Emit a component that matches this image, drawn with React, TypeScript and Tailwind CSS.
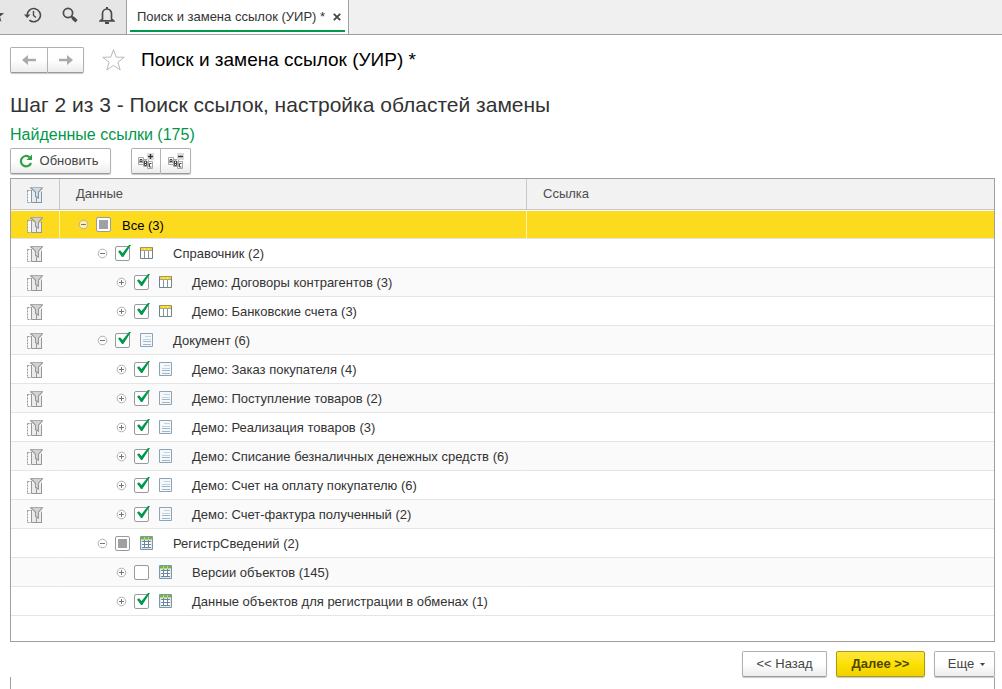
import { ReactNode, useState } from "react"
import clsx from "clsx"

type Kind = "catalog" | "document" | "register"
type State = "on" | "off" | "mixed"

type Row = {
  title: string
  level: 0 | 1 | 2
  state: State
  kind?: Kind
  filter?: boolean
}

const rows: Row[] = [
  { title: "Все (3)", level: 0, state: "mixed", filter: true },
  { title: "Справочник (2)", level: 1, state: "on", kind: "catalog", filter: true },
  { title: "Демо: Договоры контрагентов (3)", level: 2, state: "on", kind: "catalog", filter: true },
  { title: "Демо: Банковские счета (3)", level: 2, state: "on", kind: "catalog", filter: true },
  { title: "Документ (6)", level: 1, state: "on", kind: "document", filter: true },
  { title: "Демо: Заказ покупателя (4)", level: 2, state: "on", kind: "document", filter: true },
  { title: "Демо: Поступление товаров (2)", level: 2, state: "on", kind: "document", filter: true },
  { title: "Демо: Реализация товаров (3)", level: 2, state: "on", kind: "document", filter: true },
  { title: "Демо: Списание безналичных денежных средств (6)", level: 2, state: "on", kind: "document", filter: true },
  { title: "Демо: Счет на оплату покупателю (6)", level: 2, state: "on", kind: "document", filter: true },
  { title: "Демо: Счет-фактура полученный (2)", level: 2, state: "on", kind: "document", filter: true },
  { title: "РегистрСведений (2)", level: 1, state: "mixed", kind: "register" },
  { title: "Версии объектов (145)", level: 2, state: "off", kind: "register" },
  { title: "Данные объектов для регистрации в обменах (1)", level: 2, state: "on", kind: "register" },
]

const indent = ["pl-[18px]", "pl-[37px]", "pl-[56px]"]

const STAR = "M12 1.5l2.7 7.6 8.1.2-6.4 4.9 2.3 7.8-6.7-4.6-6.7 4.6 2.3-7.8L1.2 9.3l8.1-.2z"

const FilterIcon = ({ blue = false }: { blue?: boolean }) => {
  const line = blue ? "#8796a3" : "#979797"
  return (
    <svg className="mx-auto block" width="16" height="17" viewBox="0 0 16 17" fill="none">
      <path d="M0.5 4.5h4v12h-4z" fill="#fbfbfb" stroke={line} strokeDasharray="2 1" />
      <path d="M5 6h4v10H5zM10 7h4v9h-4z" fill={blue ? "#e6edf2" : "#ebebeb"} />
      <path d="M4.5 4v12M9.5 12v4M14.5 5.5v11M5 16.5h10" stroke={line} />
      <path d="M3 1h13v1l-4 4.5V13l-4-2V6.5L3 2z" fill={line} />
      <path d="M5 2h9.5L11 6v5L9 10V6z" fill={blue ? "#cfdae2" : "#d2d2d2"} />
      <path d="M3 1.5h13" stroke={blue ? "#a8b6c1" : "#aaa"} />
    </svg>
  )
}

const CatalogIcon = () => (
  <svg width="14" height="14" viewBox="0 0 14 14" fill="none">
    <path d="M0.5 1.5h12v11H0.5z" fill="#fff" stroke="#72818f" />
    <path d="M4.5 4v8.5M8.5 4v8.5" stroke="#8593a0" />
    <path d="M1 1.5h11" stroke="#a99a50" />
    <path d="M1 2h3v2H1zM5 2h3v2H5zM9 2h3v2H9z" fill="#fad91c" />
    <path d="M4.5 2v2M8.5 2v2" stroke="#f8e68a" />
    <path d="M1 4.5h11" stroke="#a9a68c" />
  </svg>
)

const DocumentIcon = () => (
  <svg width="14" height="14" viewBox="0 0 14 14" fill="none">
    <path d="M0.5 0.5h12v13H0.5z" fill="#f4f8fb" stroke="#8ca4b8" />
    <path d="M5 3.5h6M3 6.5h8" stroke="#c3d3df" />
    <path d="M3 8.5h8M3 11.5h8" stroke="#a1b6c6" />
  </svg>
)

const RegisterIcon = () => (
  <svg width="14" height="14" viewBox="0 0 14 14" fill="none">
    <path d="M0.5 0.5h12v13H0.5z" fill="#dde7ee" stroke="#7f97aa" />
    <path d="M1 1h11v3H1z" fill="#b4d88a" />
    <path d="M1 2h3M5 2h3M9 2h3" stroke="#72b73a" strokeWidth="2" />
    <path d="M2 5.5h9M2 8.5h9M2 11.5h9M4.5 4v8M8.5 4v8" stroke="#6d869b" />
    <path d="M5 6h3v2H5zM9 6h2v2H9zM5 9h3v2H5zM9 9h2v2H9zM2 6h2v2H2zM2 9h2v2H2z" fill="#fff" />
  </svg>
)

const icons = {
  catalog: <CatalogIcon />,
  document: <DocumentIcon />,
  register: <RegisterIcon />,
}

const Expander = ({ open, title }: { open: boolean; title: string }) => (
  <button type="button" aria-label={(open ? "Свернуть " : "Развернуть ") + title} className="shrink-0">
    <svg className="block" width="11" height="11" viewBox="0 0 11 11" fill="none">
      <circle cx="5.5" cy="5.5" r="4.3" fill="#fff" fillOpacity=".6" stroke="#b0b0b0" />
      <path d="M3 5.5h5" stroke="#777" />
      {!open && <path d="M5.5 3v5" stroke="#777" />}
    </svg>
  </button>
)

const Check = ({ id, state }: { id: string; state: State }) => {
  const [value, setValue] = useState(state)
  return (
    <span className="relative ml-[7px] size-[15px] shrink-0">
      <input
        id={id}
        type="checkbox"
        checked={value === "on"}
        onChange={(e) => setValue(e.target.checked ? "on" : "off")}
        className="block size-[15px] appearance-none rounded-xs border border-[#9a9a9a] bg-white"
      />
      {value === "mixed" && (
        <span className="pointer-events-none absolute top-[3px] left-[3px] size-[9px] bg-[#a0a0a0]" />
      )}
      {value === "on" && (
        <svg className="pointer-events-none absolute -top-0.5 left-0.5" width="14" height="14" viewBox="0 0 14 14">
          <path d="M1 7.5l2-1.2 2.6 2.6L12 1h2L6.3 13H5z" fill="#00984a" />
        </svg>
      )}
    </span>
  )
}

type ButtonProps = {
  children: ReactNode
  className?: string
  label?: string
  primary?: boolean
}

const Button = ({ children, className, label, primary = false }: ButtonProps) => (
  <button
    type="button"
    aria-label={label}
    className={clsx(
      "flex h-[26px] items-center justify-center border text-[13px] shadow-[0_1px_1px_#c8c8c8]",
      primary
        ? "border-[#a99a1c] bg-linear-to-b from-[#ffe838] via-[#fde000] to-[#efd200] font-bold text-[#4d4700]"
        : "border-[#b0b0b0] border-b-[#9a9a9a] bg-linear-to-b from-white from-50% to-[#ececec] text-[#444]",
      className,
    )}
  >
    {children}
  </button>
)

const AbcIcon = ({ plus = false }: { plus?: boolean }) => (
  <svg width="16" height="16" viewBox="0 0 16 16" fill="none">
    <path d="M0.5 4.5h5v7h-5zM5.5 6.5h5v7h-5zM9.5 8.5h5v7h-5z" fill="#fff" stroke="#a8a8a8" />
    <path d="M2 10V6.5h2V10M2 8.5h2" stroke="#444" />
    <path d="M6.5 8v4.5h2V8h-2M6.5 10.5h2" stroke="#444" />
    <path d="M13.5 10.5h-2v3.5h2" stroke="#444" />
    <path d="M9 0h7v7H9z" fill="#dcdcdc" />
    <path d="M10 3.5h5" stroke="#333" strokeWidth="1.4" />
    {plus && <path d="M12.5 1v5" stroke="#333" strokeWidth="1.4" />}
  </svg>
)

const TopBar = () => (
  <header className="flex h-[35px] border-b border-[#a0a0a0] bg-[#f0f0f0]">
    <div className="flex w-[126px] shrink-0 items-center bg-[#e6e6e6] pb-1 text-[#4a4a4a]">
      <button type="button" aria-label="Избранное" className="flex w-[5px] justify-end overflow-hidden">
        <svg className="shrink-0" width="16" height="16" viewBox="0 0 24 24" fill="currentColor">
          <path d={STAR} />
        </svg>
      </button>
      <button type="button" aria-label="История" className="ml-[19px] w-[18px]">
        <svg className="block" width="18" height="16" viewBox="0 0 18 16" fill="none" stroke="currentColor">
          <path d="M3.2 8.5a6.6 6.6 0 1 1 2.2 4.6" strokeWidth="1.6" />
          <path d="M0 7.5h6.5L3.2 11z" fill="currentColor" stroke="none" />
          <path d="M9.5 4v4.5l2.5 2" strokeWidth="1.4" />
        </svg>
      </button>
      <button type="button" aria-label="Поиск" className="ml-5 w-4">
        <svg className="block" width="16" height="16" viewBox="0 0 16 16" fill="none" stroke="currentColor">
          <circle cx="6" cy="6" r="4.6" strokeWidth="1.7" />
          <path d="M9.5 9.5l1.5 1.5" strokeWidth="2" />
          <path d="M10.5 10.5l4 3.7" strokeWidth="3.4" />
        </svg>
      </button>
      <button type="button" aria-label="Оповещения" className="ml-[21px] w-4">
        <svg className="block" width="16" height="18" viewBox="0 0 16 18" fill="none" stroke="currentColor">
          <path d="M3.5 13V7.5a4.5 4.5 0 0 1 9 0V13l2 1.8h-13z" strokeWidth="1.7" />
          <path d="M8 1v2M6 17h4" strokeWidth="2" />
        </svg>
      </button>
    </div>
    <div className="flex h-[34px] w-[223px] shrink-0 border-x border-[#a0a0a0] bg-white px-[3px] pb-0.5">
      <div className="flex flex-1 items-center border-b-2 border-[#00984a] pt-[3px] pl-[7px] text-[13px] text-[#333]">
        <span className="whitespace-nowrap">Поиск и замена ссылок (УИР) *</span>
        <button type="button" aria-label="Закрыть" className="ml-auto mr-1">
          <svg className="block" width="8" height="8" viewBox="0 0 8 8" fill="none" stroke="#444" strokeWidth="1.8">
            <path d="M0.8 0.8l6.4 6.4M7.2 0.8L0.8 7.2" />
          </svg>
        </button>
      </div>
    </div>
  </header>
)

const TreeTable = () => (
  <div className="mt-1 border border-[#a0a0a0] pb-[25px]">
    <table className="w-full table-fixed border-separate border-spacing-0 text-left text-[13px] text-[#333]">
      <colgroup>
        <col className="w-[49px]" />
        <col />
        <col />
      </colgroup>
      <thead>
        <tr className="h-[31px] bg-[#f2f2f2] text-[#4d4d4d]">
          <th className="border-r border-b border-[#c8c8c8] p-0" aria-label="Отбор">
            <FilterIcon blue />
          </th>
          <th className="border-r border-b border-[#c8c8c8] p-0 pl-4 font-normal">Данные</th>
          <th className="border-b border-[#c8c8c8] p-0 pl-4 font-normal">Ссылка</th>
        </tr>
      </thead>
      <tbody>
        {rows.map((row, i) => {
          const selected = i === 0
          const cell = clsx(
            "border-b border-b-[#e5e5e5] p-0",
            selected && "border-t border-t-white bg-[#fcdb1f]",
          )
          const divided = clsx(cell, "border-r", selected ? "border-r-[#fff3a8]" : "border-r-transparent")
          return (
            <tr key={row.title} className={clsx("h-[29px]", i % 2 === 0 && !selected && "bg-[#fafafa]")}>
              <td className={divided}>{row.filter && <FilterIcon />}</td>
              <td className={divided}>
                <div className={clsx("flex items-center", indent[row.level])}>
                  <Expander open={row.level < 2} title={row.title} />
                  <Check id={`row-${i}`} state={row.state} />
                  {row.kind && <span className="ml-[10px] shrink-0">{icons[row.kind]}</span>}
                  <label
                    htmlFor={`row-${i}`}
                    className={clsx("pt-0.5 whitespace-nowrap", row.kind ? "ml-[19px]" : "ml-[11px] text-black")}
                  >
                    {row.title}
                  </label>
                </div>
              </td>
              <td className={cell} />
            </tr>
          )
        })}
      </tbody>
    </table>
  </div>
)

const App = () => (
  <div className="overflow-hidden bg-white font-['Liberation_Sans',Arial,sans-serif]">
    <TopBar />

    <main className="pr-[7px] pl-[10px]">
      <div className="flex items-center pt-3">
        <Button label="Назад" className="w-[38px] rounded-l-xs">
          <svg width="14" height="10" viewBox="0 0 14 10" fill="#aaa">
            <path d="M0 5l6-5v3.7h8v2.6H6V10z" />
          </svg>
        </Button>
        <Button label="Вперед" className="w-9 rounded-r-xs border-l-0">
          <svg width="14" height="10" viewBox="0 0 14 10" fill="#aaa">
            <path d="M14 5L8 0v3.7H0v2.6h8V10z" />
          </svg>
        </Button>
        <button type="button" aria-label="Добавить в избранное" className="ml-[17px]">
          <svg className="block" width="25" height="24" viewBox="0 0 24 24" fill="none" stroke="#b4bac0">
            <path d={STAR} />
          </svg>
        </button>
        <h1 className="ml-[15px] text-[19px] leading-6 text-black">Поиск и замена ссылок (УИР) *</h1>
      </div>

      <h2 className="mt-5 text-[21px] leading-6 text-[#333]">Шаг 2 из 3 - Поиск ссылок, настройка областей замены</h2>
      <p className="mt-2 text-base leading-5 text-[#00984a]">Найденные ссылки (175)</p>

      <div className="mt-[3px] flex">
        <Button className="w-[101px] gap-[7px] rounded-xs pr-1">
          <svg width="14" height="14" viewBox="0 0 14 14" fill="none">
            <path d="M10.5 3.2A5.2 5.2 0 1 0 12 9" stroke="#2fa044" strokeWidth="2.2" />
            <path d="M13 0.5V6H7.5z" fill="#2fa044" />
          </svg>
          Обновить
        </Button>
        <Button label="Установить флажки" className="ml-5 w-[30px] rounded-l-xs">
          <AbcIcon plus />
        </Button>
        <Button label="Снять флажки" className="w-[30px] rounded-r-xs border-l-0">
          <AbcIcon />
        </Button>
      </div>

      <TreeTable />

      <div className="mt-[9px] flex justify-end gap-[9px]">
        <Button className="w-[85px] rounded-xs">&lt;&lt; Назад</Button>
        <Button primary className="w-[89px] rounded-xs">Далее &gt;&gt;</Button>
        <Button className="w-[61px] gap-1.5 rounded-xs pl-1">
          Еще
          <svg width="5" height="3" viewBox="0 0 5 3" fill="#444">
            <path d="M0 0h5L2.5 3z" />
          </svg>
        </Button>
      </div>
      <div className="h-3 border-x border-[#a0a0a0]" />
    </main>
  </div>
)

export default App
